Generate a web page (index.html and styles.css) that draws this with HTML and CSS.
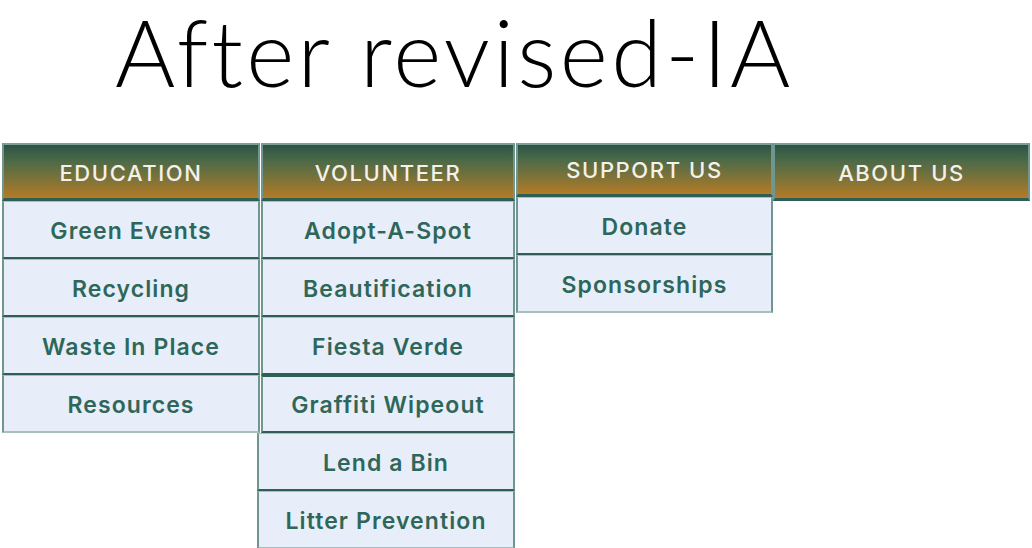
FILE: index.html
```html
<!DOCTYPE html>
<html lang="en">
<head>
<meta charset="utf-8">
<title>After revised-IA</title>
<link rel="stylesheet" href="styles.css">
</head>
<body>
<h1 class="title">After revised-IA</h1>
<nav class="menu">
  <div class="col col-edu">
    <div class="head">EDUCATION</div>
    <div class="item">Green Events</div>
    <div class="item">Recycling</div>
    <div class="item">Waste In Place</div>
    <div class="item">Resources</div>
  </div>
  <div class="col col-vol">
    <div class="head">VOLUNTEER</div>
    <div class="item">Adopt-A-Spot</div>
    <div class="item">Beautification</div>
    <div class="item">Fiesta Verde</div>
    <div class="item">Graffiti Wipeout</div>
    <div class="item item-shift">Lend a Bin</div>
    <div class="item item-shift">Litter Prevention</div>
  </div>
  <div class="col col-sup">
    <div class="head head-short">SUPPORT US</div>
    <div class="item">Donate</div>
    <div class="item">Sponsorships</div>
  </div>
  <div class="col col-about">
    <div class="head">ABOUT US</div>
  </div>
</nav>
</body>
</html>
```

FILE: styles.css
```css
* { box-sizing: border-box; }
html, body { margin: 0; padding: 0; background: #ffffff; }
body { width: 1032px; }

.title {
  margin: -6px 0 0 0;
  height: 149px;
  padding: 0 0 0 115px;
  font-family: "Lato", "DejaVu Sans", sans-serif;
  font-weight: 300;
  font-size: 92px;
  line-height: 116px;
  color: #000;
  letter-spacing: 3.4px;
  white-space: nowrap;
}

.menu {
  display: flex;
  align-items: flex-start;
  padding-left: 2px;
}

.col { display: flex; flex-direction: column; }
.col-edu { width: 258px; margin-right: 1px; }
.col-vol { width: 254px; margin-right: 1px; }
.col-sup { width: 257px; }
.col-about { width: 257px; }

.head {
  height: 58px;
  display: flex;
  align-items: center;
  justify-content: center;
  color: #f4f1ea;
  font-family: "Inter", "Open Sans", sans-serif;
  font-weight: 500;
  font-size: 22px;
  letter-spacing: 1.6px;
  background: linear-gradient(#2c5444 0%, #4c6a48 30%, #7e7338 65%, #b47b26 100%);
  border: 2px solid #6f9690;
  border-top: 2px solid #7f9e98;
  border-bottom: 3px solid #2f5e55;
  padding-top: 3px;
}
.head-short { height: 54px; padding-top: 1px; }

.item {
  height: 58px;
  display: flex;
  align-items: center;
  justify-content: center;
  background: #e8eef9;
  color: #2e675a;
  font-family: "Inter", "Open Sans", sans-serif;
  font-weight: 600;
  font-size: 23px;
  letter-spacing: 1.1px;
  padding-top: 2px;
  border-left: 2px solid #6f9690;
  border-right: 2px solid #6f9690;
  border-bottom: 2px solid #2f5e55;
  border-top: 1px solid #a9bfbc;
}
.col .item:last-child { border-bottom: 2px solid #a9bfbc; }
.col-vol .item:nth-child(5) { border-top: 2px solid #2f5e55; }
.item-shift { margin-left: -4px; margin-right: 0; width: 258px; }
```
